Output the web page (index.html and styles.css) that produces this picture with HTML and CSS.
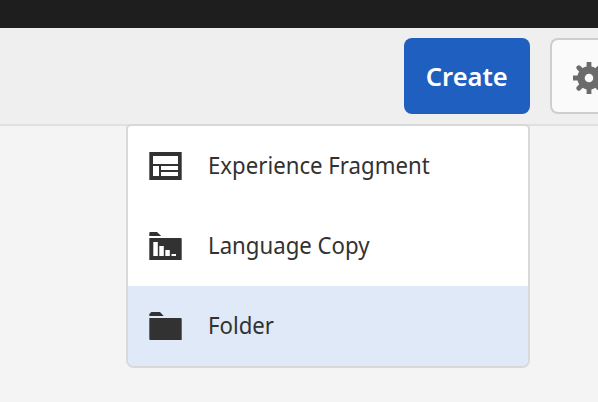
FILE: index.html
```html
<!DOCTYPE html>
<html lang="en">
<head>
<meta charset="utf-8">
<title>Create menu</title>
<link rel="stylesheet" href="styles.css">
</head>
<body>
<div class="shell"></div>
<header class="actionbar">
  <div class="create">
    <button class="btn primary"><span class="create-label">Create</span></button>
    <ul class="menu">
      <li class="item">
        <svg class="icon" width="34" height="30" viewBox="0 0 34 30"><path fill="#323232" fill-rule="evenodd" d="M1.300 1H33.700V29H1.300ZM5 5V13H30V5ZM5 15V25H11V15ZM13 15V19H30V15ZM13 21V25H30V21Z"/></svg>
        <span class="label">Experience Fragment</span>
      </li>
      <li class="item">
        <svg class="icon" width="34" height="30" viewBox="0 0 34 30"><path fill="#323232" fill-rule="evenodd" d="M1.300 5V2Q1.300 1 2.300 1H9L13.200 5ZM1.300 7H32.700Q33.700 7 33.700 8V29H1.300ZM5.300 11V25H9.800V11ZM11.300 15V25H15.800V15ZM17.300 19V25H21.800V19ZM23.500 23V25H28V23Z"/></svg>
        <span class="label">Language Copy</span>
      </li>
      <li class="item active">
        <svg class="icon" width="34" height="30" viewBox="0 0 34 30"><path fill="#323232" d="M1.300 5V3L3.300 1H12L15.700 5ZM1.300 7H32.700Q33.700 7 33.700 8V29H2.300Q1.300 29 1.300 28Z"/></svg>
        <span class="label">Folder</span>
      </li>
    </ul>
  </div>
  <button class="btn settings">
    <svg class="gear" width="34" height="34" viewBox="-17 -17 34 34">
      <circle r="8" fill="none" stroke="#6b6b6b" stroke-width="7.400"/>
      <g stroke="#6b6b6b" stroke-width="4.800">
        <path d="M0-16V-9M0 9V16M-16 0H-9M9 0H16"/>
        <path d="M-10.200-10.200L-7-7M7 7L10.200 10.200M-10.200 10.200L-7 7M7-7L10.200-10.200" stroke-linecap="round"/>
      </g>
    </svg>
  </button>
</header>
</body>
</html>
```

FILE: styles.css
```css
* { box-sizing: border-box; }

body {
  margin: 0;
  height: 402px;
  overflow: hidden;
  background: #f4f4f4;
  color: #323232;
  font-family: "Noto Sans", "Open Sans", sans-serif;
}

.shell {
  height: 28px;
  background: #1e1e1e;
}

.actionbar {
  display: flex;
  gap: 20px;
  height: 98px;
  padding: 10px 0 0 404px;
  background: #efefef;
  border-bottom: 2px solid #e0e0e0;
}

.create { position: relative; flex: none; }

.btn {
  display: flex;
  align-items: center;
  justify-content: center;
  height: 76px;
  padding: 0;
  border-radius: 8px;
  font: inherit;
}

.primary {
  width: 126px;
  border: 0;
  background: #1f5fbf;
  color: #fff;
  font-size: 26px;
  font-weight: 600;
}

.create-label {
  margin: -1px 1px 0 0;
  transform: scaleX(0.98);
}

.settings {
  flex: 1;
  min-width: 0;
  justify-content: flex-start;
  padding: 4px 0 0 20px;
  border: 2px solid #cecece;
  border-right: 0;
  border-radius: 8px 0 0 8px;
  background: #fafafa;
  overflow: hidden;
}

.gear { flex: none; }

.menu {
  position: absolute;
  top: 86px;
  right: 0;
  width: 404px;
  margin: 0;
  padding: 0;
  list-style: none;
  background: #fff;
  border: 2px solid #d8d8d8;
  border-radius: 5px 5px 8px 8px;
  overflow: hidden;
}

.item {
  display: flex;
  align-items: center;
  gap: 26px;
  height: 80px;
  padding-left: 20px;
}

.active { background: #dfe9f7; }

.label {
  margin-top: -2px;
  font-size: 24px;
  line-height: 32px;
  white-space: nowrap;
  transform-origin: left;
  transform: scaleX(0.925);
}
```
